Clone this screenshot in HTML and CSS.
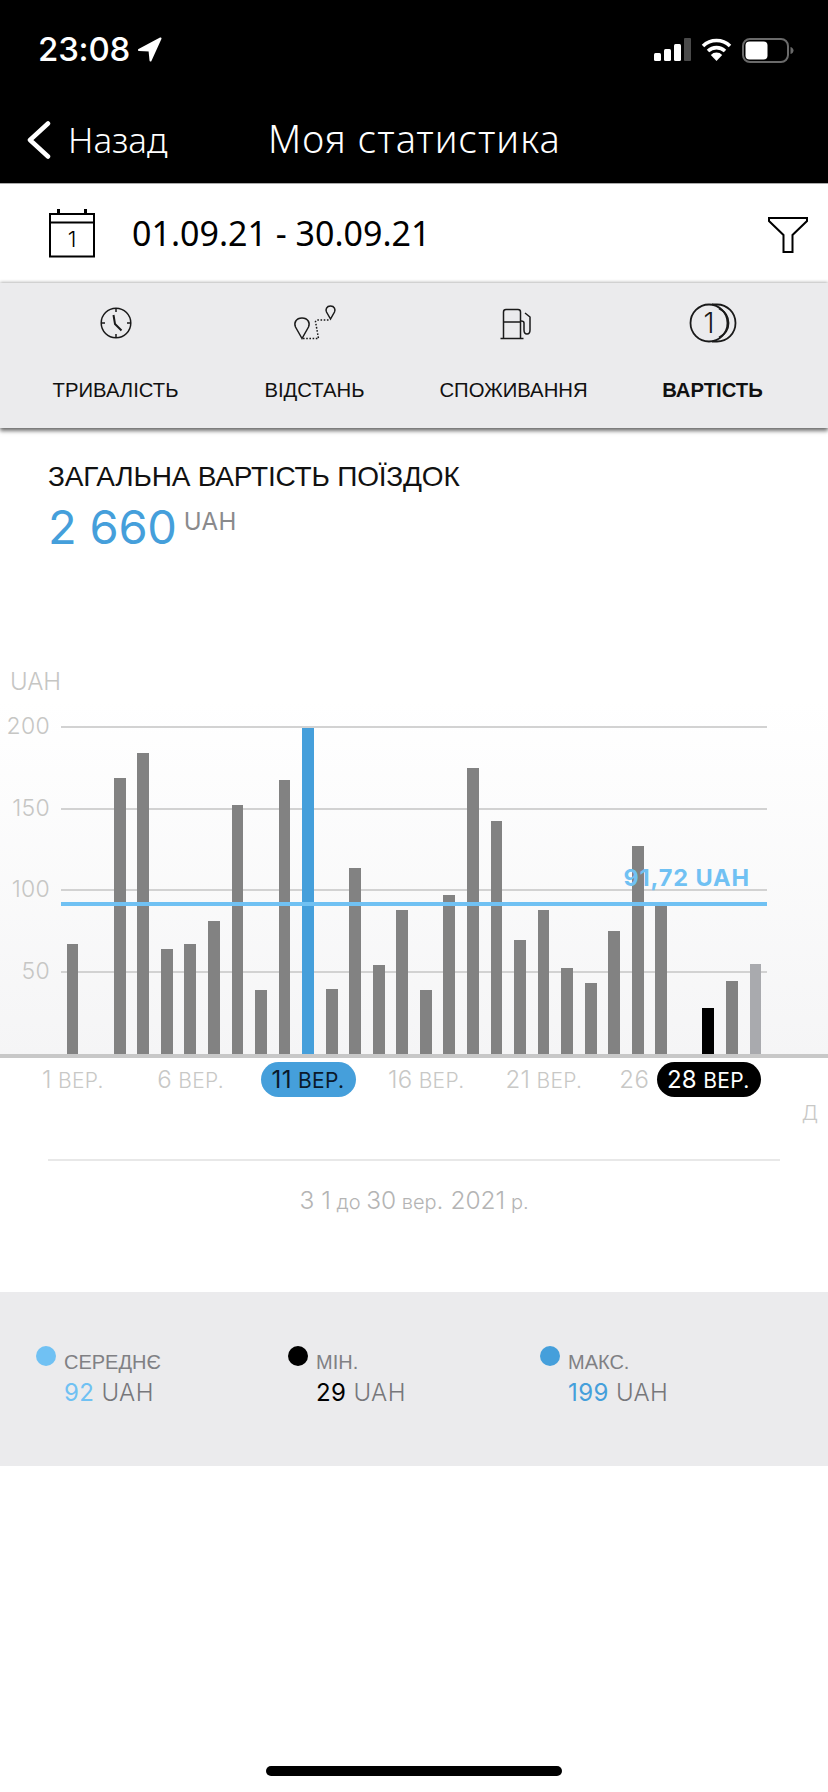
FILE: index.html
```html
<!DOCTYPE html>
<html lang="uk">
<head>
<meta charset="utf-8">
<title>Моя статистика</title>
<link rel="stylesheet" href="styles.css">
</head>
<body>
<div class="screen">
  <header class="top">
    <div class="status">
      <div class="clock"><span>23:08</span>
        <svg class="loc" width="25" height="25" viewBox="0 0 25 25"><path d="M23.500 1.500 2 13l10.500.5L13.500 23.500z" fill="#fff" stroke="#fff" stroke-width="2" stroke-linejoin="round"/></svg>
      </div>
      <div class="sys">
        <svg width="37" height="23" viewBox="0 0 37 23"><rect x="0" y="15" width="7" height="8" rx="1.5" fill="#fff"/><rect x="10" y="11" width="7" height="12" rx="1.5" fill="#fff"/><rect x="20" y="6" width="7" height="17" rx="1.5" fill="#fff"/><rect x="30" y="0" width="7" height="23" rx="1" fill="#4a4a4a"/></svg>
        <svg width="31" height="23" viewBox="0 0 31 23"><path d="M2 8a19.500 19.500 0 0 1 27 0M7 13a12.500 12.500 0 0 1 17 0" fill="none" stroke="#fff" stroke-width="3.600"/><path d="M15.500 23 9.800 17a8 8 0 0 1 11.400 0z" fill="#fff"/></svg>
        <svg width="52" height="25" viewBox="0 0 52 25"><rect x="1" y="1" width="45" height="23" rx="7" fill="none" stroke="#6a6a6a" stroke-width="2"/><rect x="3.500" y="3.500" width="22" height="18" rx="4" fill="#fff"/><path d="M48.500 9c2 .6 3 2 3 3.500s-1 3-3 3.500z" fill="#6a6a6a"/></svg>
      </div>
    </div>
    <nav class="nav">
      <div class="back">
        <svg width="26" height="38" viewBox="0 0 26 38"><path d="M22 2.500 4 19l18 16.500" fill="none" stroke="#fff" stroke-width="4.500" stroke-linecap="round" stroke-linejoin="round"/></svg>
        <span>Назад</span>
      </div>
      <h1 class="title">Моя статистика</h1>
    </nav>
  </header>

  <section class="range">
    <div class="range-left">
      <svg width="46" height="50" viewBox="0 0 46 50"><path d="M1 5h44v42.500H1zM1 13.500h44" fill="none" stroke="#000" stroke-width="2"/><path d="M9.500 0v5M36.500 0v5" stroke="#000" stroke-width="3"/><text x="23" y="38" text-anchor="middle" class="cal-num">1</text></svg>
      <span class="dates">01.09.21 - 30.09.21</span>
    </div>
    <svg class="filter" width="40" height="38" viewBox="0 0 40 38"><path d="M1 3h38v3L24.500 20v17h-9V20L1 6z" fill="none" stroke="#000" stroke-width="2"/></svg>
  </section>

  <section class="tabs">
    <div class="tab">
      <svg width="34" height="34" viewBox="0 0 34 34"><circle cx="17" cy="17" r="14.800" fill="none" stroke="#1a1a1a" stroke-width="1.500"/><path d="M17 2v4M17 28v4M2 17h4M28 17h4" stroke="#1a1a1a" stroke-width="1.500"/><path d="M14.500 9l1.500 9 6.500 6.500" fill="none" stroke="#1a1a1a" stroke-width="2"/></svg>
      <span>ТРИВАЛІСТЬ</span>
    </div>
    <div class="tab">
      <svg width="44" height="36" viewBox="0 0 44 36"><path d="M9 33.500 2.500 22c-1.800-4 .4-9 6.500-9s8.300 5 6.500 9z" fill="none" stroke="#1a1a1a" stroke-width="1.500"/><path d="M37.500 14 33.500 7c-1.200-2.600 0-6 4-6s5.200 3.400 4 6z" fill="none" stroke="#1a1a1a" stroke-width="1.500"/><path d="M10 33.500h15.500l-3-17 1.500-1.500h12" fill="none" stroke="#1a1a1a" stroke-width="1.500" stroke-dasharray="1.600 1.600"/></svg>
      <span>ВІДСТАНЬ</span>
    </div>
    <div class="tab">
      <svg width="34" height="34" viewBox="0 0 34 34"><path d="M6.500 32V6Q6.500 3.500 9 3.500h12Q23.500 3.500 23.500 6V32M6.500 16h17M3.500 32.500h23" fill="none" stroke="#1a1a1a" stroke-width="1.500"/><path d="M28 7l5 4v13q0 4-3 4t-3-4v-7q0-2-3-2" fill="none" stroke="#1a1a1a" stroke-width="1.500"/></svg>
      <span>СПОЖИВАННЯ</span>
    </div>
    <div class="tab tab-on">
      <svg width="48" height="40" viewBox="0 0 48 40"><circle cx="20" cy="20" r="18.500" fill="none" stroke="#1a1a1a" stroke-width="1.800"/><path d="M23 1.500h5c10.500 0 18.500 8.300 18.500 18.500S38.500 38.500 28 38.500h-5" fill="none" stroke="#1a1a1a" stroke-width="1.800"/><path d="M30 5.500c6 3 9.500 8.500 9.500 14.500s-3.500 11.500-9.500 14.500" fill="none" stroke="#1a1a1a" stroke-width="1.800"/><text x="20" y="29.500" text-anchor="middle" class="coin-num">1</text></svg>
      <span>ВАРТІСТЬ</span>
    </div>
  </section>

  <section class="total">
    <h2 class="total-label">ЗАГАЛЬНА ВАРТІСТЬ ПОЇЗДОК</h2>
    <div class="total-value"><b>2 660</b><span>UAH</span></div>
  </section>

  <section class="chart">
    <div class="unit">UAH</div>
    <div class="plot">
      <div class="grid">
        <div class="gline"><span>200</span><i></i></div>
        <div class="gline"><span>150</span><i></i></div>
        <div class="gline"><span>100</span><i></i></div>
        <div class="gline"><span>50</span><i></i></div>
      </div>
      <div class="bars">
        <div class="bar" style="height:110px"></div>
        <div class="bar" style="height:0"></div>
        <div class="bar" style="height:276px"></div>
        <div class="bar" style="height:300.600px"></div>
        <div class="bar" style="height:105px"></div>
        <div class="bar" style="height:110px"></div>
        <div class="bar" style="height:132.600px"></div>
        <div class="bar" style="height:249px"></div>
        <div class="bar" style="height:64.300px"></div>
        <div class="bar" style="height:274.300px"></div>
        <div class="bar bar-max" style="height:326px"></div>
        <div class="bar" style="height:65.300px"></div>
        <div class="bar" style="height:186.300px"></div>
        <div class="bar" style="height:89px"></div>
        <div class="bar" style="height:143.600px"></div>
        <div class="bar" style="height:63.600px"></div>
        <div class="bar" style="height:159.300px"></div>
        <div class="bar" style="height:286px"></div>
        <div class="bar" style="height:232.600px"></div>
        <div class="bar" style="height:114.300px"></div>
        <div class="bar" style="height:144.300px"></div>
        <div class="bar" style="height:86px"></div>
        <div class="bar" style="height:71px"></div>
        <div class="bar" style="height:123.300px"></div>
        <div class="bar" style="height:208.300px"></div>
        <div class="bar" style="height:148.300px"></div>
        <div class="bar" style="height:0"></div>
        <div class="bar bar-min" style="height:46.300px"></div>
        <div class="bar" style="height:73.300px"></div>
        <div class="bar bar-last" style="height:89.600px"></div>
      </div>
      <div class="avg-line"></div>
      <div class="avg-label">91,72 UAH</div>
    </div>
    <div class="axis"></div>
  </section>

  <section class="ticks">
    <div class="tick" style="grid-column:1"><b>1</b> ВЕР.</div>
    <div class="tick" style="grid-column:6"><b>6</b> ВЕР.</div>
    <div class="tick pill pill-blue" style="grid-column:11"><b>11</b> ВЕР.</div>
    <div class="tick" style="grid-column:16"><b>16</b> ВЕР.</div>
    <div class="tick" style="grid-column:21"><b>21</b> ВЕР.</div>
    <div class="tick tick-cut" style="grid-column:26"><b>26</b></div>
    <div class="tick pill pill-black" style="grid-column:28"><b>28</b> ВЕР.</div>
  </section>
  <div class="day-unit">Д</div>

  <div class="divider"></div>
  <p class="period"><b>З 1</b> до <b>30</b> вер<b>. 2021</b> р.</p>

  <section class="summary">
    <div class="stat">
      <i class="dot dot-avg"></i>
      <div><div class="stat-name">СЕРЕДНЄ</div><div class="stat-val"><b class="c-avg">92</b> UAH</div></div>
    </div>
    <div class="stat">
      <i class="dot dot-min"></i>
      <div><div class="stat-name">МІН.</div><div class="stat-val"><b class="c-min">29</b> UAH</div></div>
    </div>
    <div class="stat">
      <i class="dot dot-max"></i>
      <div><div class="stat-name">МАКС.</div><div class="stat-val"><b class="c-max">199</b> UAH</div></div>
    </div>
  </section>

  <div class="spacer"><div class="home"></div></div>
</div>
</body>
</html>
```
FILE: styles.css
```css
* { box-sizing: border-box; }
html, body { margin: 0; padding: 0; background: #fff; }
.screen { width: 828px; height: 1792px; display: flex; flex-direction: column; overflow: hidden; font-family: "Liberation Sans", Arial, sans-serif; color: #000; }

.top { background: #000; color: #fff; height: 184px; flex: none; border-bottom: 1px solid #aaa; }
.status { height: 112px; padding: 36px 34px 0 38px; display: flex; justify-content: space-between; align-items: flex-start; }
.clock { display: flex; align-items: center; gap: 7px; font: 500 33px/26px Inter, sans-serif; letter-spacing: -0.2px; }
.sys { display: flex; align-items: flex-start; gap: 10px; margin-top: 2px; }
.nav { display: flex; align-items: center; padding-left: 26px; height: 55px; }
.back { display: flex; align-items: center; gap: 16px; width: 242px; font: 300 35px/38px "Noto Sans", sans-serif; }
.title { margin: -4px 0 0; font: 300 38px/40px "Noto Sans", sans-serif; letter-spacing: 1.1px; }

.range { height: 99px; flex: none; display: flex; align-items: center; justify-content: space-between; padding: 0 20px 0 49px; }
.range-left { display: flex; align-items: center; gap: 37px; }
.cal-num { font: 300 22px Inter, sans-serif; }
.dates { font: 400 34px/38px "Noto Sans", sans-serif; margin-top: -2px; }

.tabs { height: 145px; flex: none; background: #ebebed; box-shadow: 0 3px 4px rgba(0,0,0,.55), 0 -1px 3px rgba(0,0,0,.25); display: grid; grid-template-columns: repeat(4, 199px); padding-left: 16px; position: relative; }
.tab { display: flex; flex-direction: column; align-items: center; font-size: 20.300px; color: #111; padding-top: 20px; position: relative; }
.tab svg { height: 40px; }
.tab span { position: absolute; top: 94px; line-height: 26px; white-space: nowrap; }
.tab-on span { font-weight: 700; }
.coin-num { font: 300 28px Inter, sans-serif; fill: #1a1a1a; }

.total { padding: 32px 0 0 48px; height: 244px; flex: none; }
.total-label { margin: 0; font: 400 28px/34px "Liberation Sans", sans-serif; letter-spacing: -0.2px; color: #111; }
.total-value { display: flex; align-items: flex-start; margin-top: 4px; }
.total-value b { font: 400 47px/58px Inter, sans-serif; letter-spacing: -.2px; color: #459fdb; }
.total-value span { font: 400 24px/30px Inter, sans-serif; color: #8a8a8c; margin: 9px 0 0 7px; letter-spacing: .3px; }

.chart { flex: none; height: 386px; margin-top: -2px; background: linear-gradient(#fff 8%, #f5f5f6 100%); }
.unit { font: 300 24px/24px Inter, sans-serif; color: #c6c6c4; padding-left: 10px; height: 56px; }
.plot { position: relative; height: 326px; }
.grid { position: absolute; inset: 0; display: flex; flex-direction: column; }
.gline { height: 82px; display: flex; align-items: flex-start; }
.gline span { width: 50px; margin-top: -13px; text-align: right; font: 300 23px/26px Inter, sans-serif; letter-spacing: .3px; color: #c6c6c4; }
.gline i { display: block; width: 706px; margin-left: 11px; height: 2px; background: #d2d2d2; }
.bars { position: absolute; inset: 0 0 -2px 0; display: flex; align-items: flex-end; gap: 11.75px; padding-left: 66.700px; }
.bar { width: 11.800px; flex: none; background: #828282; }
.bar-max { background: #459fdb; }
.bar-min { background: #000; }
.bar-last { background: #a9aaae; }
.avg-line { position: absolute; left: 61px; width: 706px; top: 176px; height: 4px; background: #70c1f3; }
.avg-label { position: absolute; right: 78px; top: 138px; font: 700 23.500px/28px Inter, sans-serif; color: #70c1f3; letter-spacing: .9px; }
.axis { height: 4px; margin-top: 2px; background: #c8c8c8; }

.ticks { flex: none; height: 44px; padding: 6px 0 0 66.700px; display: grid; grid-template-columns: repeat(30, 23.550px); grid-template-rows: 35px; width: 828px; }
.tick { grid-row: 1; justify-self: center; margin-left: -11px; white-space: nowrap; font: 300 21px/35px Inter, sans-serif; letter-spacing: .3px; color: #c8c8c6; }
.tick b { font-weight: 300; font-size: 24px; }
.tick-cut { justify-self: start; margin-left: -36px; }
.pill { padding: 0 12px 0 11px; border-radius: 17.500px; z-index: 1; font-weight: 400; }
.pill b { font-weight: 400; }
.pill-blue { background: #459fdb; color: #0a1a2b; }
.pill-black { padding: 0 11px 0 10px; background: #000; color: #fff; }
.day-unit { flex: none; height: 58.500px; font: 300 20px/26px Inter, sans-serif; color: #c8c8c6; text-align: right; padding-right: 10px; }

.divider { flex: none; height: 2px; margin: 0 48px; background: #e8e8e8; }
.period { flex: none; height: 131px; margin: 0; padding-top: 24px; text-align: center; font: 300 20px/30px Inter, sans-serif; color: #b4b4b4; }
.period b { font-weight: 300; font-size: 24.500px; }

.summary { flex: none; height: 174px; background: #ebebed; display: grid; grid-template-columns: 252px 252px 1fr; padding: 54px 0 0 36px; }
.stat { display: flex; gap: 8px; align-items: flex-start; }
.dot { width: 20px; height: 20px; border-radius: 50%; flex: none; }
.dot-avg { background: #70c1f3; }
.dot-min { background: #000; }
.dot-max { background: #459fdb; }
.stat-name { font: 400 20px/26px "Liberation Sans", sans-serif; color: #808084; margin-top: 3px; }
.stat-val { font: 300 24px/30px Inter, sans-serif; letter-spacing: .4px; color: #77777b; margin-top: 3px; }
.stat-val b { font-weight: 400; }
.c-avg { color: #70c1f3; }
.c-min { color: #000; }
.c-max { color: #459fdb; }

.spacer { flex: 1; display: flex; justify-content: center; align-items: flex-end; padding-bottom: 16px; }
.home { width: 296px; height: 10px; border-radius: 5px; background: #000; }
```
